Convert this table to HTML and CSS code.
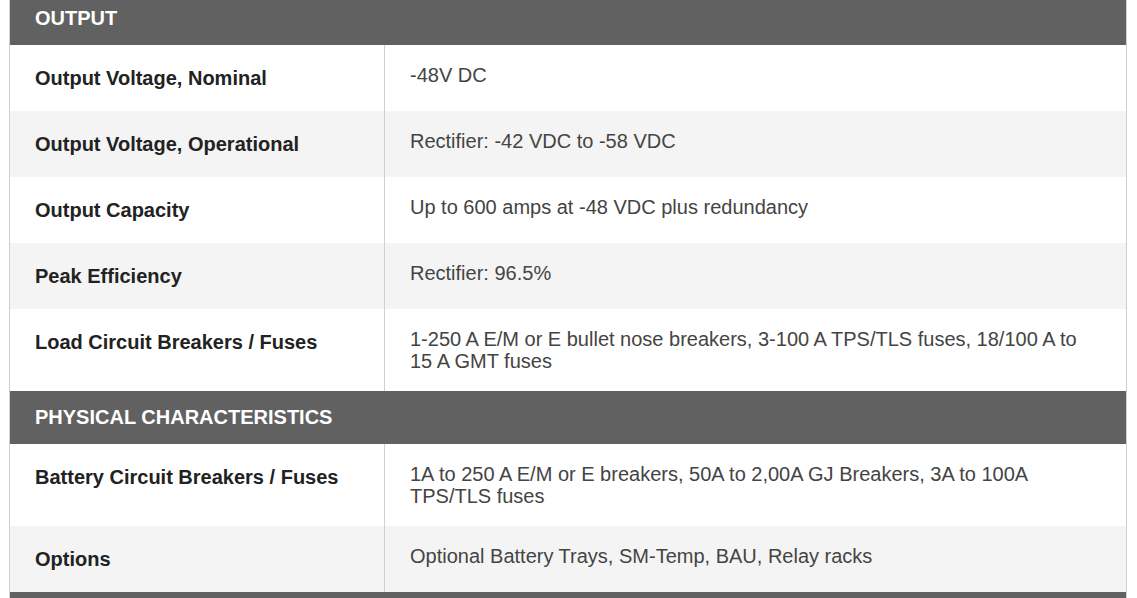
FILE: index.html
```html
<!DOCTYPE html>
<html>
<head>
<meta charset="utf-8">
<link rel="stylesheet" href="styles.css">
</head>
<body>
<table class="specs">
  <colgroup><col class="col-label"><col class="col-value"></colgroup>
  <tbody>
    <tr class="section"><th colspan="2">OUTPUT</th></tr>
    <tr class="row"><td class="label">Output Voltage, Nominal</td><td class="value">-48V DC</td></tr>
    <tr class="row alt"><td class="label">Output Voltage, Operational</td><td class="value">Rectifier: -42 VDC to -58 VDC</td></tr>
    <tr class="row"><td class="label">Output Capacity</td><td class="value">Up to 600 amps at -48 VDC plus redundancy</td></tr>
    <tr class="row alt"><td class="label">Peak Efficiency</td><td class="value">Rectifier: 96.5%</td></tr>
    <tr class="row"><td class="label">Load Circuit Breakers / Fuses</td><td class="value">1-250 A E/M or E bullet nose breakers, 3-100 A TPS/TLS fuses, 18/100 A to 15 A GMT fuses</td></tr>
    <tr class="section"><th colspan="2">PHYSICAL CHARACTERISTICS</th></tr>
    <tr class="row"><td class="label">Battery Circuit Breakers / Fuses</td><td class="value">1A to 250 A E/M or E breakers, 50A to 2,00A GJ Breakers, 3A to 100A TPS/TLS fuses</td></tr>
    <tr class="row alt"><td class="label">Options</td><td class="value">Optional Battery Trays, SM-Temp, BAU, Relay racks</td></tr>
    <tr class="section"><th colspan="2" class="empty"></th></tr>
  </tbody>
</table>
</body>
</html>
```

FILE: styles.css
```css
html, body {
  margin: 0;
  padding: 0;
  background: #ffffff;
  overflow: hidden;
}

body {
  font-family: "Liberation Sans", Arial, sans-serif;
}

.specs {
  border-collapse: collapse;
  margin: -8px 0 0 9px;
  width: 1118px;
  table-layout: fixed;
  border-left: 1px solid #d0d0d0;
  border-right: 1px solid #d0d0d0;
}

.col-label {
  width: 375px;
}

.section th {
  background: #616161;
  color: #ffffff;
  font-size: 20px;
  font-weight: bold;
  line-height: 23px;
  text-align: left;
  padding: 15px 25px 15px 25px;
}

.section th.empty {
  height: 23px;
}

.row td {
  vertical-align: top;
  padding: 19px 25px 19px 25px;
  font-size: 20px;
}

.row.alt td {
  background: #f4f4f4;
}

.label {
  color: #222222;
  font-weight: bold;
  line-height: 28px;
  border-right: 1px solid #d0d0d0;
}

.value {
  color: #444444;
  line-height: 22px;
  padding-right: 40px;
}
```
